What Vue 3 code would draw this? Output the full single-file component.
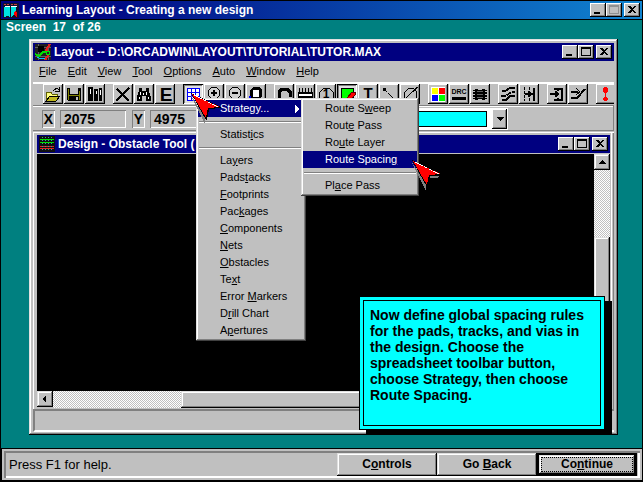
<script setup>
import { h, ref } from 'vue'

// Renders a caption in which "&" marks the underlined access key.
const Caption = (props) => {
  const [before, rest] = props.text.split('&')
  if (rest === undefined) return h('span', before)
  return h('span', [before, h('u', rest[0]), rest.slice(1)])
}
Caption.props = ['text']

const menuBar = ['&File', '&Edit', '&View', '&Tool', '&Options', '&Auto', '&Window', '&Help']

const spreadsheetMenu = [
  ['Statist&ics'],
  ['La&yers', 'Pads&tacks', '&Footprints', 'Pac&kages', '&Components', '&Nets', '&Obstacles', 'Te&xt', 'Error &Markers', 'D&rill Chart', 'A&pertures'],
]
const strategyMenu = [
  ['Route S&weep', 'Rout&e Pass', 'Ro&ute Layer', 'Route Spacin&g'],
  ['Pl&ace Pass'],
]
const selected = ref('Route Spacin&g')

const K = '#000'
const groups = [
  [
    { name: 'Open', shapes: [
      { d: 'M3 8h5l1 2h5v2H7l-3 4H3z', f: '#ffff80', s: '#606000' },
      { d: 'M3 17l4-5h10l-4 5z', f: '#c0b820', s: K },
      { d: 'M10 7q3-4 6-1M16 3v4h-4', s: K },
    ] },
    { name: 'Save', shapes: [
      { d: 'M3 4h14v13H4l-1-1z', f: K },
      { d: 'M4 5h1v11h-1zM15 7h1v9h-1zM5 11h10v1H5z', f: '#808000' },
      { d: 'M6 4h8v6H6zM12 13h2v3h-2z', f: '#c0c0c0' },
    ] },
    { name: 'Library', shapes: [
      { d: 'M3 3h5v14H3zM9 5h4v12H9zM14 4h3v13h-3z', f: K },
      { d: 'M5 5h1v5H5zM11 7h1v3h-1zM15 6h1v5h-1z', f: '#fff' },
    ] },
  ],
  [
    { name: 'Delete', shapes: [{ d: 'M4 5l12 12M16 4L3 17', s: K, w: 2 }] },
    { name: 'Find', shapes: [
      { d: 'M5 4h3v3h4V4h3v3l2 6v4h-5v-5H8v5H3v-4l2-6z', f: K },
      { d: 'M6 8h1v3H6zM5 13h1v2H5zM12 8h1v3h-1zM14 13h1v2h-1zM9 9h1v2H9z', f: '#fff' },
    ] },
    { name: 'Edit', shapes: [{ t: 'E', x: 11, y: 17, size: 19 }] },
  ],
  [
    { name: 'Spreadsheet', pressed: true, menu: true, shapes: [
      { d: 'M4 4h13v13H4z', f: '#fff' },
      { d: 'M4 4.500h13M4 8.500h13M4 12.500h13M4 16.500h13M4.500 4v13M8.500 4v13M12.500 4v13M16.500 4v13', s: '#0000ff' },
    ] },
    { name: 'Zoom in', shapes: [
      { d: 'M7.500 3.500h5l3 3v5l-3 3h-5l-3-3v-5z', f: '#d0d0d0', s: K },
      { d: 'M7 9h6M10 6v6', s: K, w: 2 },
    ] },
    { name: 'Zoom out', shapes: [
      { d: 'M7.500 3.500h5l3 3v5l-3 3h-5l-3-3v-5z', f: '#d0d0d0', s: K },
      { d: 'M7 9h6', s: K, w: 2 },
    ] },
    { name: 'Zoom all', shapes: [
      { d: 'M7 3h6l3 3v6l-2 3H6l-2-3V6z', f: K },
      { d: 'M7 6h6v7H7z', f: '#fff' },
      { d: 'M3 12h2v2H3z', f: '#0000ff' },
    ] },
  ],
  [
    { name: 'Query', shapes: [{ d: 'M5 14V8l3-3h5l3 3v5', s: K, w: 3 }] },
    { name: 'Component', shapes: [
      { d: 'M3 8h15v6H3z', f: K },
      { d: 'M4.500 4v5M7.500 4v5M10.500 4v5M13.500 4v5M16.500 4v5', s: K },
      { d: 'M4 10h13v2H4z', f: '#fff' },
    ] },
    { name: 'Pin', shapes: [
      { d: 'M3.500 14V8.500l4-4h6l4 4V14', s: K },
      { t: '1', x: 10, y: 14, size: 12 },
    ] },
    { name: 'Obstacle', pressed: true, shapes: [
      { d: 'M4 4h12v11H4z', f: '#00ff00', s: K },
      { d: 'M10 14l5-6h3v3l-4 4z', f: '#ff0000', s: '#600000' },
    ] },
    { name: 'Text', shapes: [{ t: 'T', x: 10, y: 14, size: 15 }] },
    { name: 'Connection', shapes: [
      { d: 'M4 4h3v3H4z', f: K },
      { d: 'M7 7l7 7', s: K, dash: '2 1' },
    ] },
    { name: 'Error', shapes: [{ d: 'M4.500 14V8.500l4-4h5l3 3V14M17.500 3L6 14', s: K }] },
  ],
  [
    { name: 'Color', shapes: [
      { d: 'M3 3h14v15H3z', f: '#fff' },
      { d: 'M4 4h6v6H4z', f: '#ffff00' },
      { d: 'M11 4h6v6h-6z', f: '#ff0000' },
      { d: 'M4 11h6v6H4z', f: '#0000ff' },
      { d: 'M11 11h6v6h-6z', f: '#00ff00' },
    ] },
    { name: 'Online rule check', shapes: [
      { t: 'DRC', x: 10, y: 10, size: 7 },
      { d: 'M3 13h14v3H3z', f: K },
    ] },
    { name: 'Reconnect', shapes: [
      { d: 'M5 5h3v1h4V5h3v11h-3v-1H8v1H5z', f: K },
      { d: 'M3 6h14v1H3zM3 8h14v2H3zM3 11h14v2H3zM3 14h14v1H3z', f: K },
      { d: 'M7 7h6v1H7zM7 10h6v1H7zM7 13h6v1H7z', f: '#606060' },
    ] },
  ],
  [
    { name: 'Auto path route', shapes: [
      { d: 'M4 7h3l5-3h5M4 16h4l4-4h5', s: K, w: 2 },
      { d: 'M3 12h5l5-4h4', s: K, w: 2, dash: '5 1' },
    ] },
    { name: 'Shove', shapes: [
      { d: 'M5.500 3v14M10.500 3v4M10.500 14v4', s: K, dash: '3 1' },
      { d: 'M15 4v13M6 10h9', s: K, w: 2 },
      { d: 'M9 7h1l4 3l-4 3H9z', f: K },
    ] },
  ],
  [
    { name: 'Edit segment', shapes: [
      { d: 'M7 5h4v2M11 14v2H7M11 5h4v11h-4', s: K, w: 2 },
      { d: 'M3 10h7', s: K, w: 2 },
      { d: 'M8 7h1l4 3l-4 3H8z', f: K },
    ] },
    { name: 'Add/edit route', shapes: [
      { d: 'M3 8h7M3 14h6l8-9', s: K, w: 2 },
      { d: 'M8 4l4 4l-4 3', s: K },
    ] },
  ],
  [
    { name: 'Refresh', last: true, shapes: [
      { d: 'M8 3h3v1h1v4h-1v1h-1v4h1v1h1v2h-1v1H8v-1H7v-2h1v-1h1V9H8V8H7V4h1z', f: '#ff0000' },
    ] },
  ],
]
const captionButtons = ['Minimize', 'Maximize', 'Close']
const captionPaths = {
  Minimize: 'M4 9h6v2H4z',
  Maximize: 'M3 2h10v9H3zM4 4v6h8V4z',
  Close: 'M4 3h2l2 2l2-2h2l-3 3.500l3 3.500h-2l-2-2l-2 2H4l3-3.500z',
}
const layer = ref('')
</script>

<template>
  <div class="tutor">
    <header class="titlebar titlebar-main">
      <svg class="app-icon" viewBox="0 0 16 16" aria-hidden="true">
        <path d="M0 1h16v15H0z" fill="#101030" />
        <path d="M1 2h2M4 2h2M8 2h2M11 2h3" stroke="#c04040" />
        <path d="M1 5l3-1l3 1v10l-3-1l-3 1zM8 5l3-1l2 1v9l-3-1l-2 2z" fill="#00e0e0" />
        <path d="M2 4h5M8 4h6" stroke="#fff" />
        <path d="M12 9l2 1v4l-1 1l-2-2v-3z" fill="#ff0000" />
      </svg>
      <h1>Learning Layout - Creating a new design</h1>
      <div class="caption-buttons">
        <button v-for="b in captionButtons" :key="b" :aria-label="b" :class="['cap', b.toLowerCase()]" :disabled="b === 'Maximize'">
          <svg viewBox="0 0 16 14"><path :d="captionPaths[b]" fill-rule="evenodd" /></svg>
        </button>
      </div>
    </header>

    <main class="stage">
      <p class="screen-no">Screen&nbsp; 17&nbsp; of 26</p>

      <section class="window">
        <header class="titlebar">
          <svg class="app-icon" viewBox="0 0 16 16" aria-hidden="true">
            <path d="M0 0h16v16H0z" fill="#202020" />
            <path d="M0 3.500h16M0 12.500h16M3.500 0v16M13.500 0v16" stroke="#606060" />
            <path d="M3 2h6v6H3z" fill="#000" />
            <path d="M15 0l-4 6l3 4l-4 6" fill="none" stroke="#e02020" stroke-width="2" />
            <path d="M0 10l4 2l4-4h3" fill="none" stroke="#00e000" stroke-width="2" />
            <path d="M2 13l4 2l4-1" fill="none" stroke="#00c0ff" />
            <path d="M11 7h4v4h-4z" fill="#00e000" />
            <path d="M12 8h2v2h-2z" fill="#202020" />
          </svg>
          <h2>Layout -- D:\ORCADWIN\LAYOUT\TUTORIAL\TUTOR.MAX</h2>
          <div class="caption-buttons">
            <button v-for="b in captionButtons" :key="b" :aria-label="b" :class="['cap', b.toLowerCase()]">
              <svg viewBox="0 0 16 14"><path :d="captionPaths[b]" fill-rule="evenodd" /></svg>
            </button>
          </div>
        </header>

        <nav class="menubar">
          <button v-for="m in menuBar" :key="m"><Caption :text="m" /></button>
        </nav>

        <div class="toolbar">
          <div v-for="(group, g) in groups" :key="g" class="group">
            <div v-for="tool in group" :key="tool.name" class="tool-slot">
              <button class="tool" :class="{ pressed: tool.pressed }" :aria-label="tool.name">
                <svg viewBox="0 0 20 20">
                  <template v-for="(s, i) in tool.shapes" :key="i">
                    <text v-if="s.t" :x="s.x" :y="s.y" :font-size="s.size" text-anchor="middle">{{ s.t }}</text>
                    <path v-else :d="s.d" :fill="s.f || 'none'" :stroke="s.s" :stroke-width="s.w || 1" :stroke-dasharray="s.dash" />
                  </template>
                </svg>
              </button>

              <div v-if="tool.menu" class="popup popup-main">
                <div class="row-holder">
                  <button class="item active">
                    <span>Strategy...</span>
                    <svg class="more" viewBox="0 0 4 8"><path d="M0 0l4 4l-4 4z" /></svg>
                  </button>
                  <div class="popup popup-sub">
                    <template v-for="(part, p) in strategyMenu" :key="p">
                      <hr v-if="p">
                      <button v-for="m in part" :key="m" class="item" :class="{ active: selected === m }" @click="selected = m">
                        <Caption :text="m" />
                      </button>
                    </template>
                    <svg class="pointer pointer-sub" viewBox="0 0 31 31" aria-hidden="true">
                      <path d="M0 1l15 30v-7zM19 16h9l-2 2h-7z" fill="#808080" />
                      <path d="M1 0l30 14v1l-12 1l-2 11h-1z" fill="#000" />
                      <path d="M2 1l28 13l-12 1l-2 10z" fill="#ff0000" />
                      <path d="M4 2l24 12" stroke="#fff" stroke-dasharray="4 1" />
                    </svg>
                  </div>
                </div>
                <template v-for="(part, p) in spreadsheetMenu" :key="p">
                  <hr>
                  <button v-for="m in part" :key="m" class="item"><Caption :text="m" /></button>
                </template>
                <svg class="pointer pointer-main" viewBox="0 0 31 31" aria-hidden="true">
                  <path d="M0 1l15 30v-7z" fill="#808080" />
                  <path d="M1 0l30 14v1l-12 1l-2 11h-1z" fill="#000" />
                  <path d="M2 1l28 13l-12 1l-2 10z" fill="#ff0000" />
                  <path d="M4 2l24 12" stroke="#fff" stroke-dasharray="4 1" />
                </svg>
              </div>
            </div>
          </div>
        </div>

        <div class="coords">
          <span class="well axis">X</span>
          <span class="well value">2075</span>
          <span class="well axis">Y</span>
          <span class="well value">4975</span>
          <div class="combo">
            <select v-model="layer" aria-label="Layer"><option value=""></option></select>
            <span class="drop"><svg viewBox="0 0 8 4"><path d="M0 0h8l-4 4z" /></svg></span>
          </div>
        </div>

        <section class="child">
          <header class="titlebar">
            <svg class="app-icon" viewBox="0 0 16 16" aria-hidden="true">
              <path d="M0 0h16v16H0z" fill="#101010" />
              <path d="M1 3.500h14M1 6.500h14" stroke="#00e000" />
              <path d="M1 10.500h14M1 12.500h14" stroke="#e02020" />
              <path d="M3.500 1v14M6.500 1v14M9.500 1v14M12.500 1v14" stroke="#30a0a0" stroke-dasharray="1 2" />
            </svg>
            <h2>Design - Obstacle Tool (</h2>
            <div class="caption-buttons">
              <button v-for="b in captionButtons" :key="b" :aria-label="b" :class="['cap', b.toLowerCase()]">
                <svg viewBox="0 0 16 14"><path :d="captionPaths[b]" fill-rule="evenodd" /></svg>
              </button>
            </div>
          </header>
          <div class="canvas-row">
            <div class="canvas"></div>
            <div class="scroll vertical">
              <button class="arrow" aria-label="Scroll up"><svg viewBox="0 0 16 16"><path d="M8 6l4 4H4z" /></svg></button>
              <div class="track"></div>
              <div class="thumb"></div>
            </div>
          </div>
          <div class="scroll horizontal">
            <button class="arrow" aria-label="Scroll left"><svg viewBox="0 0 16 16"><path d="M9 4v8l-4-4z" /></svg></button>
            <div class="track"></div>
            <div class="thumb"></div>
          </div>
        </section>
        <div class="statusline"></div>
      </section>

      <aside class="note">
        <p>Now define global spacing rules for the pads, tracks, and vias in the design. Choose the spreadsheet toolbar button, choose Strategy, then choose Route Spacing.</p>
      </aside>
    </main>

    <footer class="footer">
      <p>Press F1 for help.</p>
      <button class="push"><Caption text="C&ontrols" /></button>
      <button class="push"><Caption text="Go &Back" /></button>
      <button class="push default"><Caption text="Co&ntinue" /></button>
    </footer>
  </div>
</template>

<style>
body { margin: 0; background: #000; }
</style>

<style scoped>
.tutor {
  box-sizing: border-box;
  min-height: 100vh;
  display: flex;
  flex-direction: column;
  padding: 1px 1px 2px;
  background: #000;
  color: #000;
  font: 11px/17px "Liberation Sans", Arial, sans-serif;
}
.tutor * { box-sizing: border-box; }
p, h1, h2 { margin: 0; }
button {
  display: block;
  margin: 0;
  padding: 0;
  border: 0;
  background: #c0c0c0;
  color: #000;
  font: inherit;
}
svg { display: block; shape-rendering: crispEdges; }
:deep(u) { text-underline-offset: 1px; text-decoration-thickness: 1px; }

.titlebar {
  display: flex;
  align-items: center;
  height: 18px;
  padding: 0 2px;
  background: #000080;
  color: #fff;
}
.titlebar-main { background: linear-gradient(90deg, #000080 10%, #1084d0); }
.titlebar h1, .titlebar h2 {
  flex: 1;
  margin-left: 3px;
  font-size: 12px;
  line-height: 18px;
  font-weight: bold;
  white-space: nowrap;
}
.app-icon { width: 16px; height: 16px; flex: none; }
.caption-buttons { display: flex; }
.cap {
  width: 16px;
  height: 14px;
  box-shadow: inset -1px -1px #000, inset 1px 1px #fff, inset -2px -2px #808080;
}
.cap svg { width: 16px; height: 14px; }
.cap.close { margin-left: 2px; }
.cap:disabled path { fill: #909090; }

.stage {
  position: relative;
  flex: 1;
  display: flex;
  flex-direction: column;
  margin-top: 1px;
  padding: 0 24px 13px 28px;
  background: #008080;
}
.screen-no {
  height: 19px;
  margin-left: -23px;
  color: #fff;
  font-size: 12px;
  line-height: 14px;
  font-weight: bold;
}

.window {
  flex: 1;
  display: flex;
  flex-direction: column;
  padding: 4px 4px 3px;
  background: #c0c0c0;
  box-shadow: inset -1px -1px #000, inset 1px 1px #dfdfdf, inset -2px -2px #808080, inset 2px 2px #fff;
}
.menubar {
  display: flex;
  gap: 11px;
  height: 21px;
  padding-left: 6px;
}
.menubar button { line-height: 21px; }

.toolbar {
  display: flex;
  gap: 8px;
  height: 23px;
  padding-left: 10px;
  border-top: 2px solid #fff;
}
.group { display: flex; gap: 1px; flex: none; }
.group:last-child { flex: 1 1 0; min-width: 0; overflow: hidden; }
.tool-slot { position: relative; flex: none; }
.tool {
  width: 20px;
  height: 20px;
  box-shadow: inset -1px -1px #000, inset 1px 1px #fff, inset -2px -2px #808080;
}
.tool.pressed {
  background: #e0e0e0;
  box-shadow: inset 1px 1px #000, inset -1px -1px #fff, inset 2px 2px #808080;
}
.tool svg { width: 20px; height: 20px; }
.tool text { font-weight: bold; }

.coords {
  display: flex;
  align-items: center;
  gap: 5px;
  height: 26px;
  padding: 1px 0 0 9px;
  border-top: 1px solid #808080;
  border-right: 1px solid #808080;
  border-bottom: 1px solid #808080;
  box-shadow: inset 0 1px #fff;
}
.well {
  height: 18px;
  font-size: 14px;
  line-height: 18px;
  font-weight: bold;
  box-shadow: inset 1px 1px #808080, inset -1px -1px #fff;
}
.axis { width: 13px; text-align: center; }
.value { width: 66px; padding-left: 4px; }
.value + .axis { margin-left: 1px; }
.combo {
  position: relative;
  width: 208px;
  height: 22px;
  margin-left: 79px;
  padding: 3px 21px 3px 5px;
  background: #fff;
}
.combo select {
  display: block;
  width: 100%;
  height: 16px;
  appearance: none;
  border: 1px solid #000;
  border-radius: 0;
  background: #00ffff;
}
.drop {
  position: absolute;
  top: 1px;
  right: 1px;
  display: grid;
  place-items: center;
  width: 15px;
  height: 20px;
  background: #c0c0c0;
  pointer-events: none;
  box-shadow: inset -1px -1px #000, inset 1px 1px #fff, inset -2px -2px #808080;
}
.drop svg { width: 8px; height: 4px; }

.child {
  flex: 1;
  display: flex;
  flex-direction: column;
  padding: 4px 4px 1px;
  box-shadow: inset 0 1px #c0c0c0, inset 1px 2px #fff, inset -1px 0 #808080, inset -2px 0 #c0c0c0, inset -3px 0 #fff;
}
.canvas-row { flex: 1; display: flex; border-top: 1px solid #c0c0c0; }
.canvas { flex: 1; background: #000; }
.scroll { display: flex; background: #c0c0c0; }
.vertical { width: 16px; flex-direction: column; }
.horizontal { height: 17px; }
.arrow, .thumb { box-shadow: inset -1px -1px #000, inset 1px 1px #dfdfdf, inset -2px -2px #808080, inset 2px 2px #fff; }
.arrow, .arrow svg { width: 16px; height: 16px; }
.track { background: repeating-conic-gradient(#fff 0 25%, #c0c0c0 0 50%) 0 0 / 2px 2px; }
.vertical .track { flex: 67; }
.vertical .thumb { flex: 154; }
.horizontal .track { flex: 128; }
.horizontal .thumb { flex: 428; }

.statusline {
  height: 23px;
  border: solid;
  border-width: 2px 0 2px 2px;
  border-color: #808080 #fff #fff #808080;
}

.popup {
  position: absolute;
  padding: 2px;
  background: #c0c0c0;
  box-shadow: inset -1px -1px #404040, inset 1px 1px #dfdfdf, inset -2px -2px #808080, inset 2px 2px #fff;
}
.popup-main { z-index: 2; top: 14px; left: 13px; width: 110px; }
.popup-sub { z-index: 3; top: -2px; left: 103px; width: 118px; }
.row-holder { position: relative; }
.item {
  display: flex;
  align-items: center;
  justify-content: space-between;
  width: 100%;
  height: 17px;
  padding: 0 5px 0 22px;
  text-align: left;
  white-space: nowrap;
}
.item.active { background: #000080; color: #fff; }
.more { width: 4px; height: 8px; fill: #fff; }
.popup hr {
  height: 2px;
  margin: 4px 1px 3px;
  border: 0;
  border-top: 1px solid #808080;
  border-bottom: 1px solid #fff;
}
.pointer { position: absolute; width: 31px; height: 31px; pointer-events: none; }
.pointer-main { top: -5px; left: -6px; }
.pointer-sub { top: 62px; left: 110px; }

.note {
  position: absolute;
  z-index: 1;
  right: 37px;
  bottom: 18px;
  width: 246px;
  height: 134px;
  padding: 3px;
  border: 1px solid #000;
  background: #00ffff;
  box-shadow: 7px 5px #000;
}
.note p {
  height: 100%;
  padding: 6px 4px 0 6px;
  border: 1px solid #000;
  font-size: 14px;
  line-height: 16px;
  font-weight: bold;
}

.footer {
  display: flex;
  align-items: center;
  height: 31px;
  margin: 1px 0 0 1px;
  padding: 0 5px 0 7px;
  background: #c0c0c0;
  box-shadow: inset 2px 2px #c0c0c0, inset -2px -2px #c0c0c0, inset 4px 4px #808080, inset -4px -4px #fff;
}
.footer p { flex: 1; font-size: 13px; }
.push {
  width: 100px;
  height: 23px;
  font-size: 12px;
  font-weight: bold;
  box-shadow: inset -1px -1px #000, inset 1px 1px #dfdfdf, inset -2px -2px #808080, inset 2px 2px #fff;
}
.push.default {
  border: 2px solid #000;
  outline: 1px dotted #000;
  outline-offset: -5px;
}
</style>
